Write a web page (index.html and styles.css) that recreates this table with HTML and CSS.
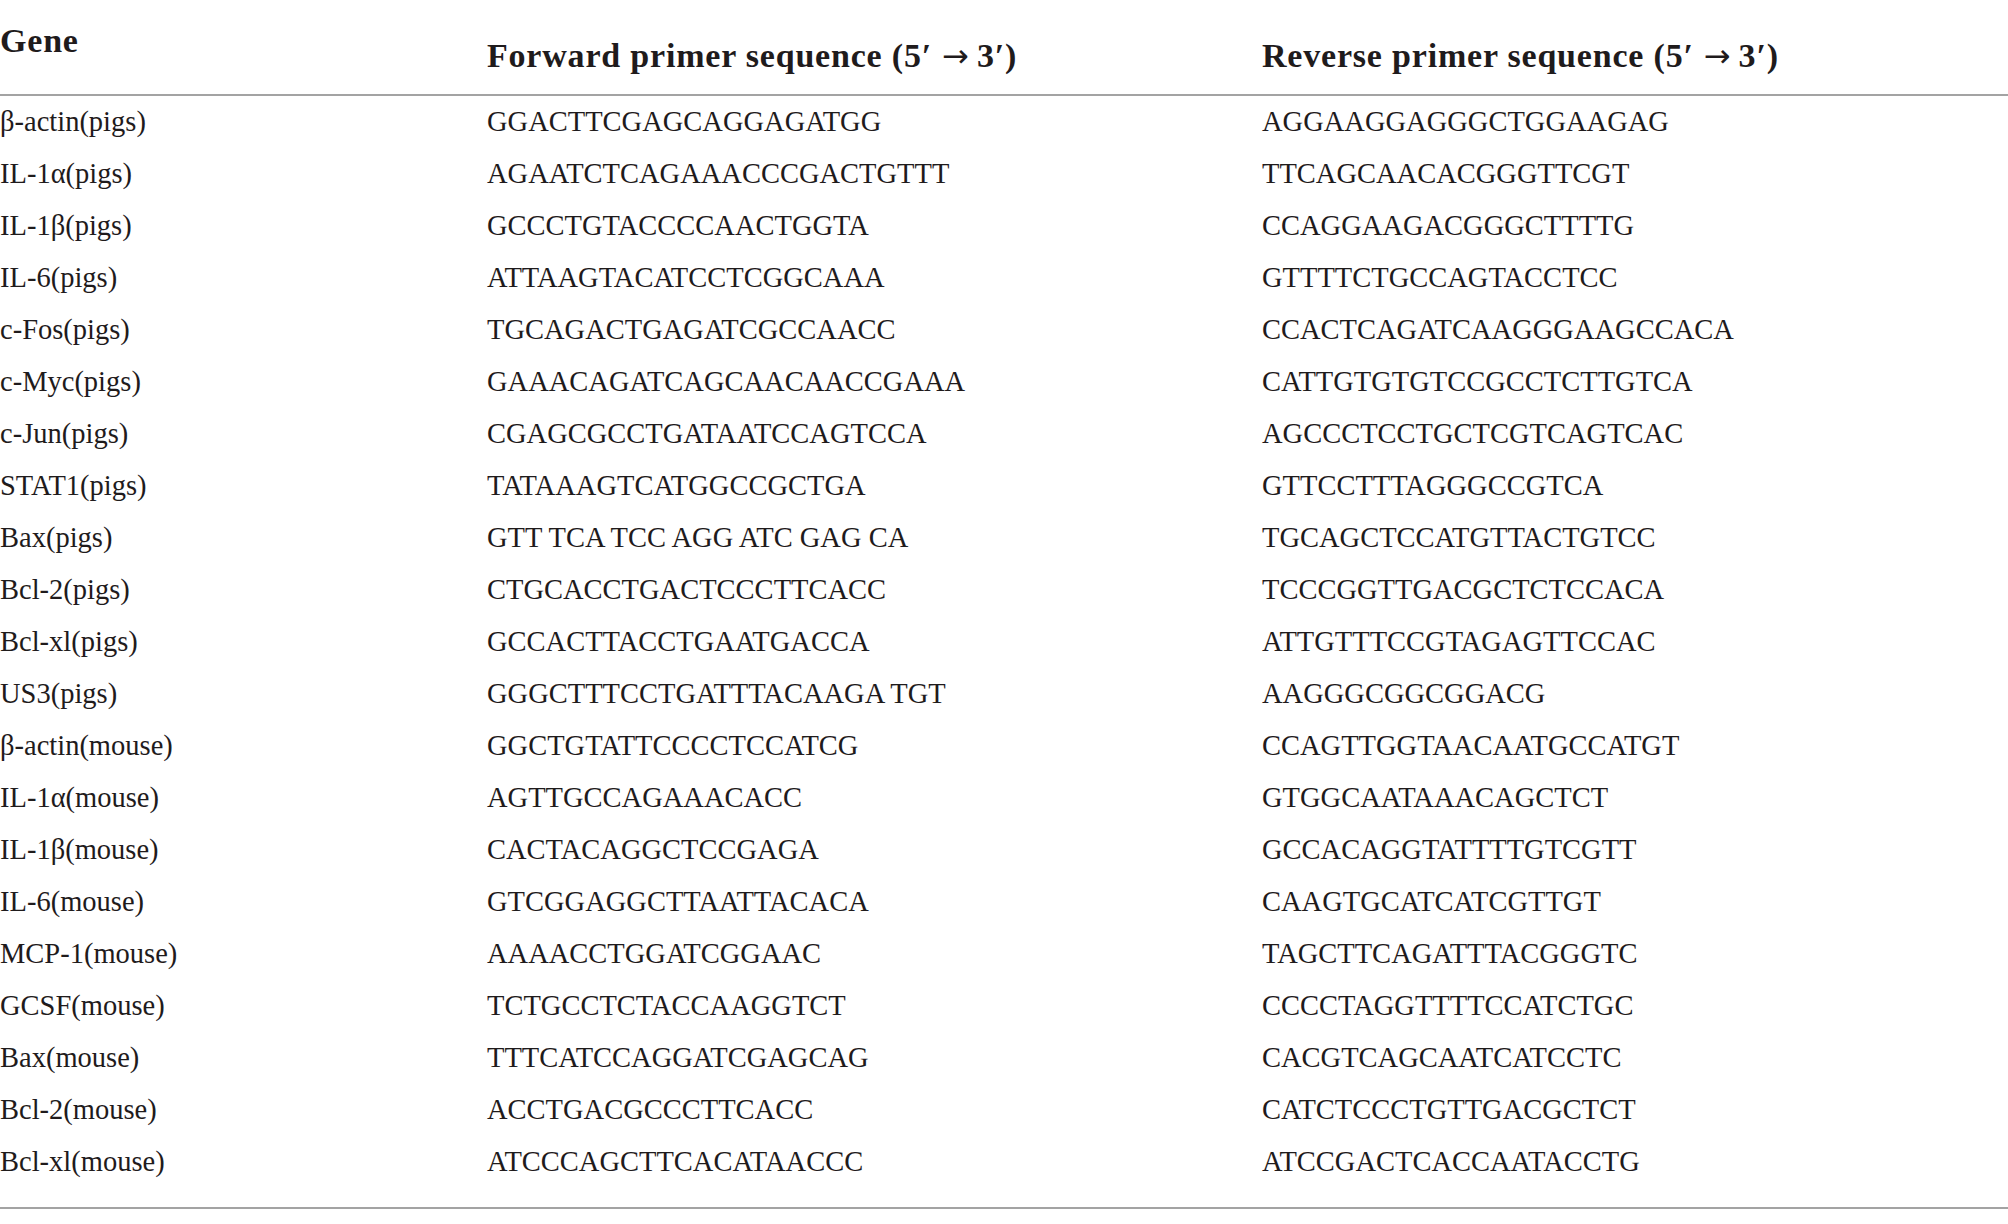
FILE: index.html
```html
<!DOCTYPE html>
<html lang="en">
<head>
<meta charset="utf-8">
<title>Primer sequences</title>
<link rel="stylesheet" href="styles.css">
</head>
<body>
<table class="primers">
  <colgroup>
    <col class="c-gene">
    <col class="c-fwd">
    <col class="c-rev">
  </colgroup>
  <thead>
    <tr>
      <th class="h-gene">Gene</th>
      <th class="h-seq">Forward primer sequence (5′<span class="arrow">→</span>3′)</th>
      <th class="h-seq">Reverse primer sequence (5′<span class="arrow">→</span>3′)</th>
    </tr>
  </thead>
  <tbody>
    <tr><td>β-actin(pigs)</td><td>GGACTTCGAGCAGGAGATGG</td><td>AGGAAGGAGGGCTGGAAGAG</td></tr>
    <tr><td>IL-1α(pigs)</td><td>AGAATCTCAGAAACCCGACTGTTT</td><td>TTCAGCAACACGGGTTCGT</td></tr>
    <tr><td>IL-1β(pigs)</td><td>GCCCTGTACCCCAACTGGTA</td><td>CCAGGAAGACGGGCTTTTG</td></tr>
    <tr><td>IL-6(pigs)</td><td>ATTAAGTACATCCTCGGCAAA</td><td>GTTTTCTGCCAGTACCTCC</td></tr>
    <tr><td>c-Fos(pigs)</td><td>TGCAGACTGAGATCGCCAACC</td><td>CCACTCAGATCAAGGGAAGCCACA</td></tr>
    <tr><td>c-Myc(pigs)</td><td>GAAACAGATCAGCAACAACCGAAA</td><td>CATTGTGTGTCCGCCTCTTGTCA</td></tr>
    <tr><td>c-Jun(pigs)</td><td>CGAGCGCCTGATAATCCAGTCCA</td><td>AGCCCTCCTGCTCGTCAGTCAC</td></tr>
    <tr><td>STAT1(pigs)</td><td>TATAAAGTCATGGCCGCTGA</td><td>GTTCCTTTAGGGCCGTCA</td></tr>
    <tr><td>Bax(pigs)</td><td>GTT TCA TCC AGG ATC GAG CA</td><td>TGCAGCTCCATGTTACTGTCC</td></tr>
    <tr><td>Bcl-2(pigs)</td><td>CTGCACCTGACTCCCTTCACC</td><td>TCCCGGTTGACGCTCTCCACA</td></tr>
    <tr><td>Bcl-xl(pigs)</td><td>GCCACTTACCTGAATGACCA</td><td>ATTGTTTCCGTAGAGTTCCAC</td></tr>
    <tr><td>US3(pigs)</td><td>GGGCTTTCCTGATTTACAAGA TGT</td><td>AAGGGCGGCGGACG</td></tr>
    <tr><td>β-actin(mouse)</td><td>GGCTGTATTCCCCTCCATCG</td><td>CCAGTTGGTAACAATGCCATGT</td></tr>
    <tr><td>IL-1α(mouse)</td><td>AGTTGCCAGAAACACC</td><td>GTGGCAATAAACAGCTCT</td></tr>
    <tr><td>IL-1β(mouse)</td><td>CACTACAGGCTCCGAGA</td><td>GCCACAGGTATTTTGTCGTT</td></tr>
    <tr><td>IL-6(mouse)</td><td>GTCGGAGGCTTAATTACACA</td><td>CAAGTGCATCATCGTTGT</td></tr>
    <tr><td>MCP-1(mouse)</td><td>AAAACCTGGATCGGAAC</td><td>TAGCTTCAGATTTACGGGTC</td></tr>
    <tr><td>GCSF(mouse)</td><td>TCTGCCTCTACCAAGGTCT</td><td>CCCCTAGGTTTTCCATCTGC</td></tr>
    <tr><td>Bax(mouse)</td><td>TTTCATCCAGGATCGAGCAG</td><td>CACGTCAGCAATCATCCTC</td></tr>
    <tr><td>Bcl-2(mouse)</td><td>ACCTGACGCCCTTCACC</td><td>CATCTCCCTGTTGACGCTCT</td></tr>
    <tr class="last"><td>Bcl-xl(mouse)</td><td>ATCCCAGCTTCACATAACCC</td><td>ATCCGACTCACCAATACCTG</td></tr>
  </tbody>
</table>
</body>
</html>
```
FILE: styles.css
```css
html, body {
  margin: 0;
  padding: 0;
  background: #ffffff;
}

body {
  width: 2008px;
  font-family: "Liberation Serif", "Times New Roman", serif;
  color: #1f1b1c;
}

.primers {
  width: 2008px;
  border-collapse: collapse;
  table-layout: fixed;
}

.c-gene { width: 487px; }
.c-fwd { width: 775px; }
.c-rev { width: 746px; }

.primers th {
  font-weight: bold;
  font-size: 34px;
  line-height: 32px;
  letter-spacing: 0.8px;
  text-align: left;
  vertical-align: top;
  height: 95px;
  box-sizing: border-box;
  padding: 40px 0 0 0;
  border-bottom: 2px solid #a3a3a3;
  white-space: nowrap;
}

.primers th.h-gene {
  padding-top: 25px;
}

.arrow {
  font-family: "DejaVu Sans", sans-serif;
  font-weight: normal;
  font-size: 32px;
  letter-spacing: 0;
  margin: 0 8px 0 10px;
}

.primers td {
  font-size: 28.5px;
  line-height: 52px;
  height: 52px;
  padding: 0;
  vertical-align: top;
  white-space: nowrap;
}

.primers tr.last td {
  padding-bottom: 19px;
  border-bottom: 2px solid #a3a3a3;
}
```
